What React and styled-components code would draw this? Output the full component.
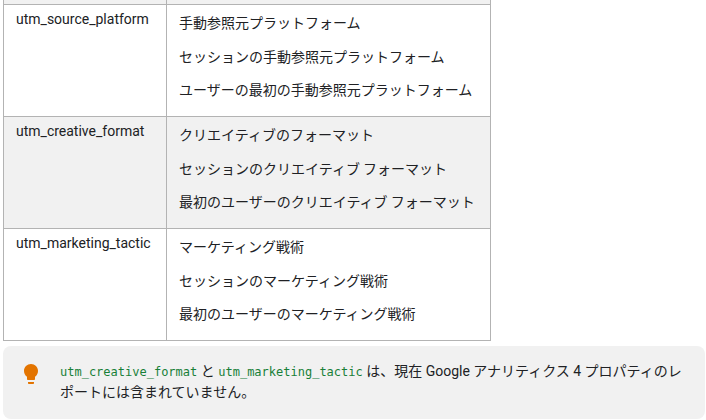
import React from 'react'
import styled, { createGlobalStyle } from 'styled-components'

const GlobalStyle = createGlobalStyle`
    body {
        margin: 0;
        background: #ffffff;
        color: #202124;
        font-family: Roboto, "Noto Sans CJK JP", sans-serif;
        font-size: 14px;
    }
`

const Page = styled.div`
    width: 706px;
    height: 420px;
    overflow: hidden;
    box-sizing: border-box;
    padding: 0 1px 0 3px;
`

const Table = styled.table`
    border-collapse: collapse;
    width: 488px;
    table-layout: fixed;
    margin-top: -1px;
`

const Row = styled.tr`
    background: ${props => (props.shaded ? '#f1f1f1' : '#ffffff')};
`

const Cell = styled.td`
    border: 1px solid #b3b3b3;
    vertical-align: top;
    padding: ${props => (props.stub ? '0' : props.name ? '4px 12px 0' : '7px 12px 3.5px')};
    height: ${props => (props.stub ? '4px' : 'auto')};
    line-height: 20px;
`

const Name = styled.div`
    font-family: Roboto, sans-serif;
    font-size: 14px;
    line-height: 20px;
`

const Line = styled.p`
    margin: 0 0 13.5px;
    font-family: "Noto Sans CJK JP", sans-serif;
    font-size: 14px;
    line-height: 20px;
`

const Note = styled.aside`
    display: flex;
    align-items: flex-start;
    gap: 17px;
    margin-top: 5px;
    padding: 15px 20px 16px 16px;
    background: #f1f1f1;
    border-radius: 8px;
`

const NoteText = styled.div`
    flex: 1;
    line-height: 21px;
    font-family: Roboto, "Noto Sans CJK JP", sans-serif;
    font-size: 14px;
`

const Code = styled.code`
    font-family: "DejaVu Sans Mono", monospace;
    font-size: 12px;
    line-height: 1;
    color: #188038;
`

const Bulb = () => (
    <svg width="24" height="24" viewBox="0 0 24 24" style={{ flex: '0 0 24px', marginTop: '1px' }}>
        <path
            fill="#e37400"
            d="M9 21c0 .55.45 1 1 1h4c.55 0 1-.45 1-1v-1H9v1zm3-19C8.14 2 5 5.14 5 9c0 2.38 1.19 4.47 3 5.74V17c0 .55.45 1 1 1h6c.55 0 1-.45 1-1v-2.26c1.81-1.27 3-3.36 3-5.74 0-3.86-3.14-7-7-7z"
        />
    </svg>
)

const rows = [
    {
        name: 'utm_source_platform',
        lines: ['手動参照元プラットフォーム', 'セッションの手動参照元プラットフォーム', 'ユーザーの最初の手動参照元プラットフォーム'],
    },
    {
        name: 'utm_creative_format',
        lines: ['クリエイティブのフォーマット', 'セッションのクリエイティブ フォーマット', '最初のユーザーのクリエイティブ フォーマット'],
        shaded: true,
    },
    {
        name: 'utm_marketing_tactic',
        lines: ['マーケティング戦術', 'セッションのマーケティング戦術', '最初のユーザーのマーケティング戦術'],
    },
]

const App = () => {
    return (
        <Page>
            <GlobalStyle />
            <Table>
                <colgroup>
                    <col style={{ width: '163px' }} />
                    <col />
                </colgroup>
                <tbody>
                    <Row shaded>
                        <Cell stub="1" />
                        <Cell stub="1" />
                    </Row>
                    {rows.map(row => (
                        <Row key={row.name} shaded={row.shaded}>
                            <Cell name="1">
                                <Name>{row.name}</Name>
                            </Cell>
                            <Cell>
                                {row.lines.map(line => (
                                    <Line key={line}>{line}</Line>
                                ))}
                            </Cell>
                        </Row>
                    ))}
                </tbody>
            </Table>
            <Note>
                <Bulb />
                <NoteText>
                    <Code>utm_creative_format</Code> と <Code>utm_marketing_tactic</Code> は、現在 Google アナリティクス 4 プロパティのレポートには含まれていません。
                </NoteText>
            </Note>
        </Page>
    )
}

export default App
